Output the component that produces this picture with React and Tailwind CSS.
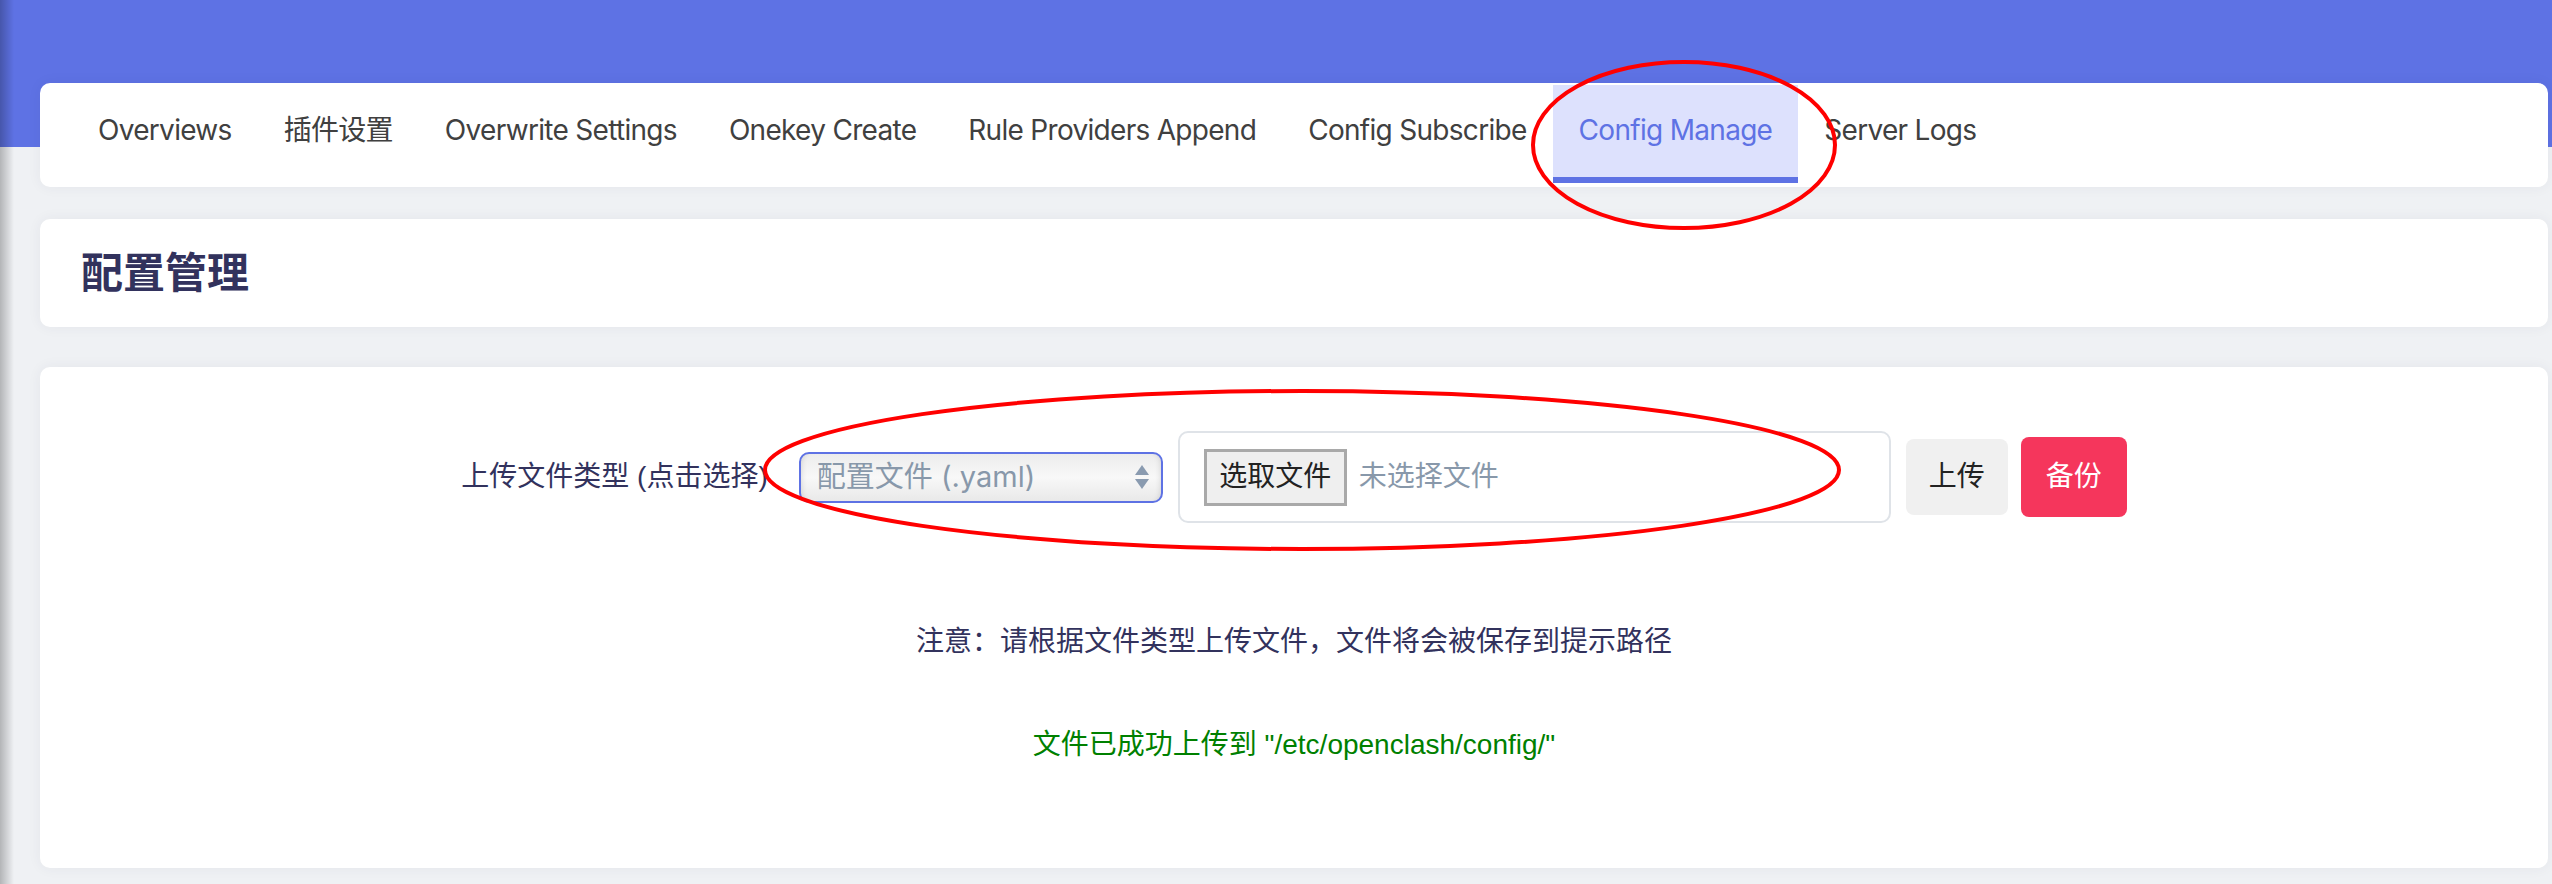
import React from 'react';

const tabs = [
  'Overviews',
  '插件设置',
  'Overwrite Settings',
  'Onekey Create',
  'Rule Providers Append',
  'Config Subscribe',
  'Config Manage',
  'Server Logs',
];

const sans = "font-['Inter','Noto_Sans_CJK_SC',sans-serif]";
const body = "font-['Liberation_Sans','Noto_Sans_CJK_SC',sans-serif]";

function NavCard() {
  return (
    <div className="flex rounded-[10px] bg-white pl-[32px] pt-[2px] pb-[4px] shadow-[0_0_14px_rgba(50,50,93,0.06)]">
      {tabs.map((t) => {
        const active = t === 'Config Manage';
        return (
          <div
            key={t}
            className={
              active
                ? `flex h-[98px] items-center border-b-[6px] border-[#5e72e4] bg-[#dde1fd] px-[26px] pb-[2px] text-[28px] tracking-[-0.7px] text-[#5e72e4] ${sans}`
                : `flex h-[98px] items-center border-b-[6px] border-transparent px-[26px] pb-[2px] text-[28px] tracking-[-0.7px] text-[#404040] ${sans}`
            }
          >
            {t}
          </div>
        );
      })}
    </div>
  );
}

function SelectBox() {
  return (
    <div className="flex h-[51px] w-[364px] items-center justify-between rounded-[10px] border-2 border-[#5e72e4] bg-gradient-to-b from-[#ececec] via-[#f8f8f8] to-[#e9e9e9] pl-[16px] pr-[10px] shadow-[inset_6px_0_6px_-6px_rgba(0,0,0,0.15),inset_-6px_0_6px_-6px_rgba(0,0,0,0.15)]">
      <span className={`text-[29px] text-[#8898aa] ${sans}`}>配置文件 (.yaml)</span>
      <svg width="18" height="30" viewBox="0 0 18 30">
        <polygon points="9,3 16,13 2,13" fill="#8a9bb0" />
        <polygon points="2,17 16,17 9,27" fill="#8a9bb0" />
      </svg>
    </div>
  );
}

function FileBox() {
  return (
    <div className="flex h-[92px] w-[713px] items-center rounded-[10px] border-2 border-[#dfe3e8] bg-white pl-[24px]">
      <div className={`flex h-[57px] w-[143px] items-center justify-center border-[3px] border-[#a9a9a9] bg-[#efefef] text-[28px] text-[#222] ${body}`}>
        选取文件
      </div>
      <span className={`ml-[12px] text-[28px] text-[#8898aa] ${body}`}>未选择文件</span>
    </div>
  );
}

export default function App() {
  return (
    <div className="relative h-[884px] w-[2552px] overflow-hidden bg-[#eff1f4]">
      <div className="h-[147px] bg-[#5e72e4]" />
      <div className="-mt-[64px] flex flex-col pl-[40px] pr-[4px]">
        <NavCard />

        <div className="mt-[32px] flex h-[108px] items-center rounded-[10px] bg-white pl-[41px] shadow-[0_0_14px_rgba(50,50,93,0.06)]">
          <h2 className={`text-[42px] font-bold text-[#32325d] ${body}`}>配置管理</h2>
        </div>

        <div className="mt-[40px] flex h-[501px] flex-col items-center rounded-[10px] bg-white pt-[64px] shadow-[0_0_14px_rgba(50,50,93,0.06)]">
          <div className="flex items-center">
            <span className={`mr-[31px] text-[28px] text-[#32325d] ${body}`}>上传文件类型 (点击选择)</span>
            <SelectBox />
            <div className="ml-[15px]">
              <FileBox />
            </div>
            <button className={`ml-[15px] h-[76px] w-[102px] rounded-[8px] bg-[#f0f0f0] text-[28px] text-[#222] ${body}`}>
              上传
            </button>
            <button className={`ml-[13px] h-[80px] w-[106px] rounded-[8px] bg-[#f5365c] text-[28px] text-white ${body}`}>
              备份
            </button>
          </div>
          <p className={`mt-[99px] text-[28px] leading-[40px] text-[#32325d] ${body}`}>
            注意：请根据文件类型上传文件，文件将会被保存到提示路径
          </p>
          <p className={`mt-[63px] text-[28px] leading-[40px] text-[#008000] ${body}`}>
            文件已成功上传到 "/etc/openclash/config/"
          </p>
        </div>
      </div>

      {/* left window edge shade */}
      <div className="pointer-events-none absolute left-0 top-0 h-full w-[14px] bg-gradient-to-r from-black/25 to-transparent" />

      {/* red annotation marks */}
      <svg className="pointer-events-none absolute left-0 top-0" width="2552" height="884">
        <ellipse cx="1684" cy="145" rx="151" ry="83" fill="none" stroke="#ff0000" strokeWidth="4" />
        <ellipse cx="1302" cy="470" rx="537" ry="79" fill="none" stroke="#ff0000" strokeWidth="4" />
      </svg>
    </div>
  );
}
